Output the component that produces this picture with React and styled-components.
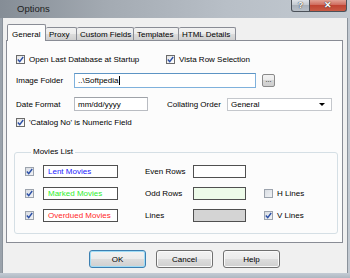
import React from "react";
import styled, { createGlobalStyle } from "styled-components";

const GlobalStyle = createGlobalStyle`
    html, body {
        margin: 0;
        padding: 0;
        background: #ffffff;
        overflow: hidden;
    }
    body {
        font-family: "Liberation Sans", Arial, sans-serif;
        font-size: 8px;
        color: #000;
    }
`

const Window = styled.div`
    width: 350px;
    height: 278px;
    display: flex;
    flex-direction: column;
    box-sizing: border-box;
    background: linear-gradient(to right, #9aa2ab, #b6bec7 50%, #c2c9d1);
`

const TitleBar = styled.div`
    height: 18px;
    display: flex;
    align-items: flex-start;
    padding-right: 3px;
    background: linear-gradient(to right, #858d96, #a3aab2 30%, #b8bfc7 65%, #c3cad1);
`

const Title = styled.span`
    flex: 1;
    padding: 2px 0 0 17px;
    font-size: 9.5px;
    line-height: 13px;
    color: #1d1d1d;
`

const CaptionButton = styled.div`
    width: ${p => p.$w}px;
    height: 12px;
    box-sizing: border-box;
    display: flex;
    align-items: center;
    justify-content: center;
    border: 1px solid #4b5159;
    border-top: none;
    border-left: ${p => (p.$close ? "none" : "1px solid #4b5159")};
    border-radius: ${p => (p.$close ? "0 0 3px 0" : "0 0 0 3px")};
    background: ${p =>
        p.$close
            ? "linear-gradient(#e2a295, #cf6a5c 45%, #c04432 50%, #c85a44)"
            : "linear-gradient(#dfe3e8, #c3c9d0 45%, #aab2bb 50%, #b9c0c8)"};
    color: #fff;
    font-weight: bold;
    font-size: 9px;
    line-height: 9px;
    text-shadow: 0 0 1px #333, 0 0 1px #333;
`

const Client = styled.div`
    flex: 1;
    margin: 0 2px;
    border-left: 1px solid #8a929b;
    border-right: 1px solid #8a929b;
    background: #f0f0f0;
    display: flex;
    flex-direction: column;
    padding: 6px 4px 0 3px;
`

const BottomFrame = styled.div`
    height: 5px;
    background: linear-gradient(#c4ccd5, #aeb7c1);
`

const TabRow = styled.div`
    display: flex;
    align-items: flex-end;
    height: 17px;
    margin-bottom: -1px;
    padding-left: 1px;
    position: relative;
    z-index: 1;
`

const Tab = styled.div`
    width: ${p => p.$w}px;
    box-sizing: border-box;
    height: ${p => (p.$active ? "17px" : "13px")};
    margin-bottom: ${p => (p.$active ? "0" : "1px")};
    border: 1px solid #898c95;
    border-bottom: none;
    border-left: ${p => (p.$active ? "1px solid #898c95" : "none")};
    border-radius: 2px 2px 0 0;
    background: ${p =>
        p.$active ? "#fcfcfc" : "linear-gradient(#f2f2f2, #ebebeb 50%, #dddddd 50%, #cfcfcf)"};
    padding: ${p => (p.$active ? "4px 0 0 4px" : "1px 0 0 3px")};
    line-height: 11px;
    white-space: nowrap;
`

const Panel = styled.div`
    height: 203px;
    box-sizing: border-box;
    border: 1px solid #898c95;
    background: #fcfcfc;
    display: flex;
    flex-direction: column;
    padding: 12px 0 0 9px;
`

const Row = styled.div`
    display: flex;
    align-items: center;
    height: ${p => p.$h}px;
    margin-top: ${p => p.$mt || 0}px;
`

const CheckItem = styled.label`
    display: flex;
    align-items: center;
    gap: 4px;
    height: 12px;
    width: ${p => (p.$w ? `${p.$w}px` : "auto")};
    white-space: nowrap;
`

const Box = styled.span`
    width: 9px;
    height: 9px;
    box-sizing: border-box;
    flex: none;
    display: flex;
    align-items: center;
    justify-content: center;
    border: 1px solid ${p => (p.$muted ? "#9ca3ad" : "#6b6b6b")};
    background: ${p => (p.$muted ? "linear-gradient(135deg, #d9dde3, #f0f2f5)" : "linear-gradient(135deg, #e4e4e4, #ffffff)")};
`

const FieldLabel = styled.span`
    width: ${p => p.$w}px;
    margin-left: ${p => p.$ml || 0}px;
    flex: none;
    white-space: nowrap;
`

const TextInput = styled.div`
    width: ${p => p.$w}px;
    height: ${p => p.$h}px;
    box-sizing: border-box;
    border: 1px solid ${p => (p.$focus ? "#7fb1dc" : "#b9bcc2")};
    border-top-color: ${p => (p.$focus ? "#5d94c4" : "#9ea2a8")};
    background: #fff;
    padding-left: 3px;
    display: flex;
    align-items: center;
    white-space: nowrap;
`

const Caret = styled.span`
    width: 1px;
    height: 9px;
    background: #000;
    margin-left: 1px;
`

const BrowseButton = styled.div`
    width: 13px;
    height: 13px;
    margin-left: 6px;
    box-sizing: border-box;
    border: 1px solid #8a8a8a;
    border-radius: 2px;
    background: linear-gradient(#f2f2f2, #ebebeb 50%, #d6d6d6 50%, #cfcfcf);
    font-size: 7px;
    line-height: 9px;
    text-align: center;
`

const Select = styled.div`
    width: 105px;
    height: 13px;
    box-sizing: border-box;
    border: 1px solid #c4c7cc;
    background: #fff;
    display: flex;
    align-items: center;
    justify-content: space-between;
    padding: 0 6px 0 3px;
`

const Arrow = styled.span`
    width: 0;
    height: 0;
    border-left: 3px solid transparent;
    border-right: 3px solid transparent;
    border-top: 3px solid #000;
`

const Group = styled.fieldset`
    margin: 18px 4px 0 -2px;
    padding: 0 0 11px 10px;
    border: 1px solid #d5dfe5;
    border-radius: 3px;
    min-width: 0;
`

const Legend = styled.legend`
    margin-left: 6px;
    padding: 0 2px;
    line-height: 12px;
`

const GroupGrid = styled.div`
    display: grid;
    grid-template-columns: 18px 102px 48px 71px auto;
    grid-auto-rows: 13px;
    row-gap: 9px;
    align-items: center;
    padding-top: 7px;
`

const NameBox = styled.div`
    width: 75px;
    height: 13px;
    box-sizing: border-box;
    border: 1px solid #505050;
    background: #fff;
    color: ${p => p.$color};
    padding-left: 4px;
    line-height: 11px;
    white-space: nowrap;
`

const ColorBox = styled.div`
    width: 53px;
    height: 13px;
    box-sizing: border-box;
    border: 1px solid #505050;
    background: ${p => p.$fill};
`

const ButtonRow = styled.div`
    display: flex;
    gap: 10px;
    margin-top: 7px;
    padding-left: 83px;
`

const Button = styled.div`
    width: 57px;
    height: 18px;
    box-sizing: border-box;
    border: 1px solid ${p => (p.$default ? "#3c7fb1" : "#707070")};
    border-radius: 3px;
    box-shadow: ${p => (p.$default ? "inset 0 0 0 1px #9fdcf6" : "inset 0 0 0 1px #fafafa")};
    background: linear-gradient(#f2f2f2, #ebebeb 50%, #dddddd 50%, #cfcfcf);
    display: flex;
    align-items: center;
    justify-content: center;
`

const Check = ({ checked, muted }) => (
    <Box $muted={muted}>
        {checked && (
            <svg width="7" height="7" viewBox="0 0 7 7">
                <path d="M0.8 3.6 L2.7 5.6 L6.2 1" fill="none" stroke="#2b4fa6" strokeWidth="1.4" />
            </svg>
        )}
    </Box>
)

const movies = [
    { name: "Lent Movies", color: "#2222ff", label: "Even Rows", fill: "#ffffff", lines: null },
    { name: "Marked Movies", color: "#2eee2e", label: "Odd Rows", fill: "#edfbe9", lines: { text: "H Lines", checked: false } },
    { name: "Overdued Movies", color: "#ff2a2a", label: "Lines", fill: "#d4d4d4", lines: { text: "V Lines", checked: true } },
]

const tabs = [
    { text: "General", w: 39 },
    { text: "Proxy", w: 31 },
    { text: "Custom Fields", w: 57 },
    { text: "Templates", w: 45 },
    { text: "HTML Details", w: 57 },
]

export default function App() {
    return (
        <>
            <GlobalStyle />
            <Window>
                <TitleBar>
                    <Title>Options</Title>
                    <CaptionButton $w={19}>?</CaptionButton>
                    <CaptionButton $w={37} $close>✕</CaptionButton>
                </TitleBar>
                <Client>
                    <TabRow>
                        {tabs.map((t, i) => (
                            <Tab key={t.text} $w={t.w} $active={i === 0}>{t.text}</Tab>
                        ))}
                    </TabRow>
                    <Panel>
                        <Row $h={12}>
                            <CheckItem $w={150}><Check checked />Open Last Database at Startup</CheckItem>
                            <CheckItem><Check checked />Vista Row Selection</CheckItem>
                        </Row>
                        <Row $h={15} $mt={8}>
                            <FieldLabel $w={58}>Image Folder</FieldLabel>
                            <TextInput $w={182} $h={15} $focus>..\Softpedia<Caret /></TextInput>
                            <BrowseButton>...</BrowseButton>
                        </Row>
                        <Row $h={14} $mt={9}>
                            <FieldLabel $w={58}>Date Format</FieldLabel>
                            <TextInput $w={74} $h={14}>mm/dd/yyyy</TextInput>
                            <FieldLabel $w={60} $ml={19}>Collating Order</FieldLabel>
                            <Select>General<Arrow /></Select>
                        </Row>
                        <Row $h={12} $mt={5}>
                            <CheckItem><Check checked />'Catalog No' is Numeric Field</CheckItem>
                        </Row>
                        <Group>
                            <Legend>Movies List</Legend>
                            <GroupGrid>
                                {movies.map(m => (
                                    <React.Fragment key={m.name}>
                                        <Check checked muted />
                                        <NameBox $color={m.color}>{m.name}</NameBox>
                                        <span>{m.label}</span>
                                        <ColorBox $fill={m.fill} />
                                        {m.lines ? (
                                            <CheckItem><Check checked={m.lines.checked} muted />{m.lines.text}</CheckItem>
                                        ) : <span />}
                                    </React.Fragment>
                                ))}
                            </GroupGrid>
                        </Group>
                    </Panel>
                    <ButtonRow>
                        <Button $default>OK</Button>
                        <Button>Cancel</Button>
                        <Button>Help</Button>
                    </ButtonRow>
                </Client>
                <BottomFrame />
            </Window>
        </>
    )
}
